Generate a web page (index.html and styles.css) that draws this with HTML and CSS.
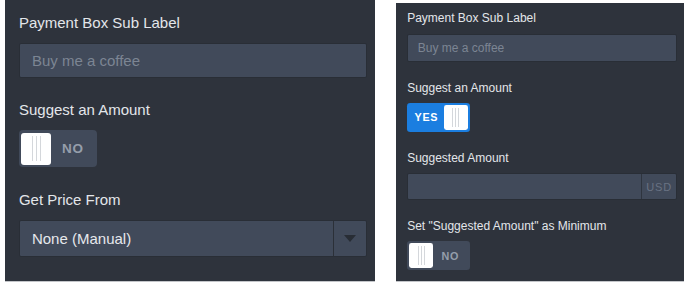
FILE: index.html
```html
<!DOCTYPE html>
<html lang="en">
<head>
  <meta charset="UTF-8" />
  <meta name="viewport" content="width=device-width, initial-scale=1.0"/>
  <title>Payment Box Settings</title>
  <link rel="stylesheet" href="styles.css">
</head>
<body>
  <div class="page">
    <!-- 금액 제안 꺼짐 -->
    <section class="panel">
      <div class="field">
        <div class="field-label">Payment Box Sub Label</div>
        <div class="text-input placeholder">Buy me a coffee</div>
      </div>
      <div class="field">
        <div class="field-label">Suggest an Amount</div>
        <div class="toggle">
          <span class="knob"></span>
          <span class="toggle-text">NO</span>
        </div>
      </div>
      <div class="field">
        <div class="field-label">Get Price From</div>
        <div class="select">
          <span class="select-value">None (Manual)</span>
          <span class="select-arrow"><i class="caret"></i></span>
        </div>
      </div>
    </section>

    <!-- 금액 제안 켜짐 -->
    <section class="panel panel-small">
      <div class="field">
        <div class="field-label">Payment Box Sub Label</div>
        <div class="text-input placeholder">Buy me a coffee</div>
      </div>
      <div class="field">
        <div class="field-label">Suggest an Amount</div>
        <div class="toggle on">
          <span class="toggle-text">YES</span>
          <span class="knob"></span>
        </div>
      </div>
      <div class="field">
        <div class="field-label">Suggested Amount</div>
        <div class="input-group">
          <span class="input-value"></span>
          <span class="addon">USD</span>
        </div>
      </div>
      <div class="field">
        <div class="field-label">Set "Suggested Amount" as Minimum</div>
        <div class="toggle">
          <span class="knob"></span>
          <span class="toggle-text">NO</span>
        </div>
      </div>
    </section>
  </div>
</body>
</html>
```

FILE: styles.css
```css
* { box-sizing: border-box; }
html, body {
  margin: 0;
  padding: 0;
  background-color: #fff;
  font-family: "Liberation Sans", Helvetica, Arial, sans-serif;
}

.page {
  display: flex;
  align-items: flex-start;
  gap: 21px;
  padding-left: 5px;
}

.panel {
  width: 370px;
  height: 282px;
  font-size: 15px;
  padding: 0.9em 0.55em 0 0.93em;
  background-color: #2e333c;
  border-bottom: 1px solid #c3c5c9;
  color: #e3e6ea;
}
.panel-small {
  width: 288px;
  height: 279px;
  margin-top: 3px;
  font-size: 12px;
  padding-top: 0.7em;
}

.field + .field { margin-top: 1.58em; }
.field-label {
  line-height: 1.2;
  margin-bottom: 0.74em;
}
.panel-small .field-label { margin-bottom: 0.66em; }

/* 입력창 */
.text-input,
.input-group,
.select {
  display: flex;
  background-color: #414a5a;
  border: 1px solid #292e36;
  border-radius: 2px;
}
.text-input {
  height: 2.33em;
  align-items: center;
  padding: 0 0.8em;
}
.placeholder { color: #7c8593; }

.input-group { height: 2.27em; }
.input-value { flex: 1; }
.addon {
  width: 3.2em;
  border-left: 1px solid #2f353f;
  display: flex;
  align-items: center;
  justify-content: center;
  font-size: 0.92em;
  letter-spacing: 0.08em;
  color: #697283;
}

.select {
  height: 2.47em;
  color: #e6e8ec;
}
.select-value {
  flex: 1;
  display: flex;
  align-items: center;
  padding-left: 0.8em;
}
.select-arrow {
  width: 2.2em;
  border-left: 1px solid #2b3038;
  display: flex;
  align-items: center;
  justify-content: center;
}
.caret {
  width: 0;
  height: 0;
  border-left: 0.4em solid transparent;
  border-right: 0.4em solid transparent;
  border-top: 0.47em solid #282d35;
}

/* 토글 스위치 */
.toggle {
  display: flex;
  width: 5.2em;
  height: 2.47em;
  padding: 0.17em;
  border-radius: 0.27em;
  background-color: #414a5a;
}
.panel-small .toggle { height: 2.4em; }
.toggle.on { background-color: #1b7ee0; }
.knob {
  width: 2em;
  display: flex;
  align-items: center;
  justify-content: center;
  background-color: #fff;
  border-radius: 0.2em;
}
.knob::before {
  content: "";
  width: 9px;
  height: 78%;
  background: linear-gradient(to right, #d4d7db 1px, transparent 1px) 0 0 / 4px 100% repeat-x;
}
.panel-small .knob::before {
  width: 7px;
  background-size: 3px 100%;
}
.toggle-text {
  flex: 1;
  display: flex;
  align-items: center;
  justify-content: center;
  font-size: 0.9em;
  font-weight: bold;
  letter-spacing: 0.06em;
  color: #959eab;
}
.toggle.on .toggle-text { color: #fff; }
```
